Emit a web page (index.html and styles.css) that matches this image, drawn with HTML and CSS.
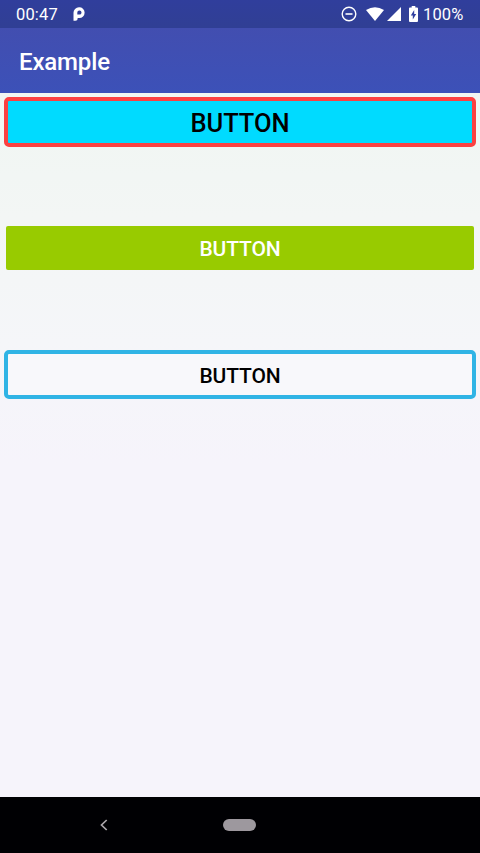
FILE: index.html
```html
<!DOCTYPE html>
<html lang="en">
<head>
<meta charset="utf-8">
<title>Example</title>
<link rel="stylesheet" href="styles.css">
</head>
<body>
<div class="screen">
  <div class="status-bar">
    <span class="clock">00:47</span>
    <svg class="icon-p" width="12" height="14" viewBox="0 0 12 14" aria-hidden="true"><path fill="#fff" fill-rule="evenodd" d="M.5 6A5.500 5.500 0 0 1 6 .3 5.300 5.300 0 0 1 11.600 5.600 5.300 5.300 0 0 1 6.200 11H4.600V12Q4.600 13.800 2.500 13.800H.5ZM4.300 5.500V7.600H6.200A2.100 2.100 0 1 0 4.300 5.500Z"/></svg>
    <svg class="icon-dnd" width="16" height="16" viewBox="0 0 16 16" aria-hidden="true"><circle cx="8" cy="8" r="6.800" fill="none" stroke="#fff" stroke-width="1.400"/><path d="M4.500 8h7" stroke="#fff" stroke-width="1.600"/></svg>
    <svg class="icon-wifi" width="18" height="14" viewBox="0 0 18 14" aria-hidden="true"><path fill="#fff" d="M0 3Q9-2.400 18 3L9 14Z"/></svg>
    <svg class="icon-cell" width="14" height="14" viewBox="0 0 14 14" aria-hidden="true"><path fill="#fff" d="M14 0V14H0Z"/></svg>
    <svg class="icon-battery" width="9" height="16" viewBox="0 0 9 16" aria-hidden="true"><path fill="#fff" d="M2.700 0h3.600v1.600H8q1 0 1 1V15q0 1-1 1H1q-1 0-1-1V2.600q0-1 1-1h1.700z"/><path fill="#303f9f" d="M5.200 4L1.800 9.400h2V13.500L7.200 8h-2z"/></svg>
    <span class="charge">100%</span>
  </div>
  <header class="app-bar"><h1>Example</h1></header>
  <main class="content">
    <button class="btn btn-cyan">BUTTON</button>
    <button class="btn btn-green">BUTTON</button>
    <button class="btn btn-outline">BUTTON</button>
  </main>
  <nav class="nav-bar">
    <svg class="nav-back" width="8" height="12" viewBox="0 0 8 12" aria-hidden="true"><path d="M6.700 1L1.500 6l5.200 5" fill="none" stroke="#aaa6aa" stroke-width="1.700"/></svg>
    <span class="nav-home"></span>
  </nav>
</div>
</body>
</html>
```
FILE: styles.css
```css
* { box-sizing: border-box; }
body { margin: 0; font-family: Roboto, sans-serif; }
.screen { width: 480px; height: 853px; display: flex; flex-direction: column; overflow: hidden; }
.status-bar { height: 28px; flex: none; display: flex; align-items: center; padding: 0 16px; background: linear-gradient(#303e9c, #303f94); color: #fff; font-size: 16.5px; line-height: 28px; }
.status-bar svg { flex: none; display: block; }
.clock { width: 57px; padding-top: 2px; letter-spacing: 0.15px; }
.icon-dnd { margin-left: 256px; }
.icon-wifi { margin-left: 9px; }
.icon-cell { margin-left: 3px; }
.icon-battery { margin-left: 8px; }
.charge { margin-left: 5px; padding-top: 2px; letter-spacing: 0.15px; }
.app-bar { height: 65px; flex: none; display: flex; align-items: center; padding: 2px 19px 0; background: linear-gradient(#424eb0, #3c51b8); color: #fff; }
.app-bar h1 { margin: 0; font-size: 24px; font-weight: 500; line-height: 28px; letter-spacing: -0.15px; }
.content { flex: 1; display: flex; flex-direction: column; padding: 4px 4px 0; background: linear-gradient(#f0f6f2, #f3f6f5 125px, #f5f6f9 250px, #f6f4fb 370px, #f6f4fb); }
.btn { display: flex; align-items: center; justify-content: center; margin: 0; padding: 0; border: 0; font-family: inherit; font-weight: 500; font-size: 21px; letter-spacing: -0.1px; color: #000; }
.btn-cyan { height: 50px; border: 4px solid #fb4141; border-radius: 5px; background: #00dbff; font-size: 25.5px; padding-top: 2px; }
.btn-green { height: 44px; margin: 79px 2px 0; border-radius: 2px; background: #98cb00; color: #fff; padding-top: 2px; }
.btn-outline { height: 49px; margin-top: 80px; border: 4px solid #30b4e5; border-radius: 5px; background: #f8f8fb; padding-top: 2px; }
.nav-bar { height: 56px; flex: none; display: flex; align-items: center; padding-left: 100px; background: #000003; }
.nav-home { width: 33px; height: 12px; margin-left: 115px; border-radius: 6px; background: #9d989e; }
```
